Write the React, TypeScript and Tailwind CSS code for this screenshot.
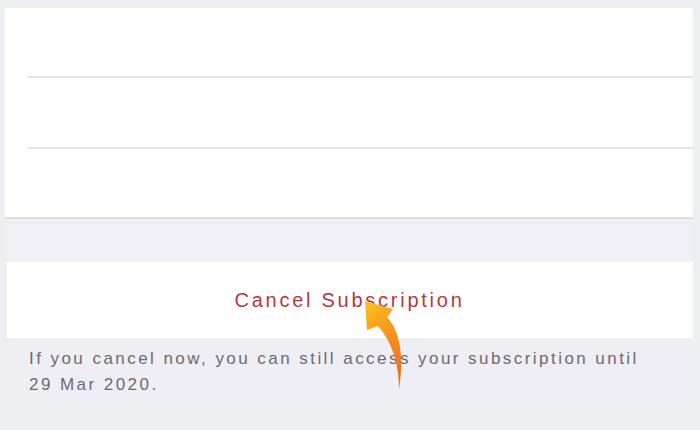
export default function App() {
  return (
    <div className="relative h-[430px] w-[700px] overflow-hidden bg-[#eeeff2] pt-[8px] pl-[5px] pr-[7px] font-['Liberation_Sans',Arial,sans-serif]">
      <div className="flex flex-col">
        <div className="flex h-[211px] flex-col border-b-2 border-[#dfdfe3] bg-white">
          <div className="ml-[23px] h-[70px] border-b-2 border-[#e4e4e6]" />
          <div className="ml-[23px] h-[71px] border-b-2 border-[#e4e4e6]" />
          <div className="flex-1" />
        </div>
        <div className="h-[43px] bg-[#f0eff6]" />
        <div className="flex h-[76px] items-center justify-center border-l border-[#d4f2d4] bg-white">
          <span className="text-[20px] tracking-[2.75px] text-[#b5383d]">Cancel Subscription</span>
        </div>
        <div className="h-[62px] bg-[#efeef5] pl-[24px] pt-[8px] text-[17px] leading-[26px] tracking-[2.45px] text-[#6b6b70]">
          <p>If you cancel now, you can still access your subscription until</p>
          <p>29 Mar 2020.</p>
        </div>
      </div>
      <svg
        className="absolute left-[355px] top-[295px]"
        width="60"
        height="100"
        viewBox="0 0 60 100"
      >
        <defs>
          <linearGradient id="arrowFill" x1="0" y1="0" x2="0.3" y2="1">
            <stop offset="0" stopColor="#fdc21c" />
            <stop offset="0.45" stopColor="#f59a1e" />
            <stop offset="1" stopColor="#ee6f20" />
          </linearGradient>
        </defs>
        <path
          d="M10 6 L38 14 L32 22 C43 34 50 56 44 95 C44 70 38 48 23 31 L12 35 Z"
          fill="url(#arrowFill)"
        />
      </svg>
    </div>
  );
}
